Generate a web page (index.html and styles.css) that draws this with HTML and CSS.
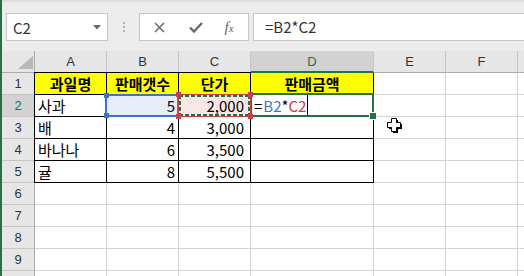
FILE: index.html
```html
<!DOCTYPE html>
<html lang="ko">
<head>
    <meta charset="UTF-8">
    <title>판매금액</title>
    <link rel="stylesheet" href="styles.css">
</head>
<body>
    <div class="window">
        <div class="formula-bar">
            <div class="namebox">
                <span>C2</span>
                <svg class="drop" width="8" height="5" viewBox="0 0 8 5"><polygon points="0,0 8,0 4,4.5" fill="#6a6a6a"/></svg>
            </div>
            <div class="grip"><i></i><i></i><i></i></div>
            <div class="fx-buttons">
                <svg width="11" height="11" viewBox="0 0 11 11"><path d="M1 1 L10 10 M10 1 L1 10" stroke="#6a6a6a" stroke-width="1.5" fill="none"/></svg>
                <svg width="14" height="11" viewBox="0 0 14 11"><path d="M1 5.5 L5 9.5 L13 1" stroke="#6a6a6a" stroke-width="2.4" fill="none"/></svg>
                <span class="fx">f<span>x</span></span>
            </div>
            <div class="formula-input">=B2*C2</div>
        </div>

        <div class="sheet">
            <div class="cell corner"><svg width="15" height="13" viewBox="0 0 15 13"><polygon points="15,0 15,13 0,13" fill="#b8b8b8"/></svg></div>
            <div class="cell ch">A</div>
            <div class="cell ch">B</div>
            <div class="cell ch">C</div>
            <div class="cell ch active">D</div>
            <div class="cell ch">E</div>
            <div class="cell ch">F</div>
            <div class="cell ch"></div>

            <div class="cell rh">1</div>
            <div class="cell tb ta tt hd">과일명</div>
            <div class="cell tb tt hd">판매갯수</div>
            <div class="cell tb tt hd">단가</div>
            <div class="cell tb hd">판매금액</div>
            <div class="cell"></div>
            <div class="cell"></div>
            <div class="cell"></div>

            <div class="cell rh active">2</div>
            <div class="cell tb ta">사과</div>
            <div class="cell tb num ref-blue-fill">5
                <div class="ref-blue"><b class="sq tl"></b><b class="sq bl"></b></div>
            </div>
            <div class="cell tb num price ref-red-fill">2,000
                <div class="ref-red"><b class="sq tl"></b><b class="sq bl"></b><b class="sq tr"></b><b class="sq br"></b></div>
                <div class="marquee"></div>
            </div>
            <div class="cell tb editing">
                <span class="edit-text">=<span class="blue">B2</span>*<span class="red">C2</span></span>
                <div class="active-cell"><b class="handle"></b></div>
            </div>
            <div class="cell"></div>
            <div class="cell"></div>
            <div class="cell"></div>

            <div class="cell rh">3</div>
            <div class="cell tb ta">배</div>
            <div class="cell tb num">4</div>
            <div class="cell tb num price">3,000</div>
            <div class="cell tb"></div>
            <div class="cell"></div>
            <div class="cell"></div>
            <div class="cell"></div>

            <div class="cell rh">4</div>
            <div class="cell tb ta">바나나</div>
            <div class="cell tb num">6</div>
            <div class="cell tb num price">3,500</div>
            <div class="cell tb"></div>
            <div class="cell"></div>
            <div class="cell"></div>
            <div class="cell"></div>

            <div class="cell rh">5</div>
            <div class="cell tb ta">귤</div>
            <div class="cell tb num">8</div>
            <div class="cell tb num price">5,500</div>
            <div class="cell tb"></div>
            <div class="cell"></div>
            <div class="cell"></div>
            <div class="cell"></div>

            <div class="cell rh">6</div>
            <div class="cell"></div><div class="cell"></div><div class="cell"></div><div class="cell"></div><div class="cell"></div><div class="cell"></div><div class="cell"></div>
            <div class="cell rh">7</div>
            <div class="cell"></div><div class="cell"></div><div class="cell"></div><div class="cell"></div><div class="cell"></div><div class="cell"></div><div class="cell"></div>
            <div class="cell rh">8</div>
            <div class="cell"></div><div class="cell"></div><div class="cell"></div><div class="cell"></div><div class="cell"></div><div class="cell"></div><div class="cell"></div>
            <div class="cell rh">9</div>
            <div class="cell"></div><div class="cell"></div><div class="cell"></div><div class="cell"></div><div class="cell"></div><div class="cell"></div><div class="cell"></div>
            <div class="cell rh"></div>
            <div class="cell"></div><div class="cell"></div><div class="cell"></div><div class="cell"></div><div class="cell"></div><div class="cell"></div><div class="cell"></div>
        </div>

        <svg class="pointer" width="17" height="18" viewBox="0 0 17 18">
            <polygon points="6,2 11,2 11,6 15,6 15,11 11,11 11,15 6,15 6,11 2,11 2,6 6,6" fill="#000" transform="translate(1,1)"/>
            <polygon points="5.5,1.5 10.5,1.5 10.5,5.5 14.5,5.5 14.5,10.5 10.5,10.5 10.5,14.5 5.5,14.5 5.5,10.5 1.5,10.5 1.5,5.5 5.5,5.5" fill="#fff" stroke="#000" stroke-width="1"/>
        </svg>
    </div>
</body>
</html>
```

FILE: styles.css
```css
body {
    margin: 0;
    width: 524px;
    height: 276px;
    overflow: hidden;
    background: #fff;
    font-family: "Noto Sans CJK KR", "Liberation Sans", sans-serif;
    color: #000;
}
.window {
    position: relative;
    height: 276px;
    border-left: 2px solid #217346;
    overflow: hidden;
}

/* formula bar */
.formula-bar {
    height: 51px;
    box-sizing: border-box;
    background: #ececec;
    border-top: 2px solid #dcdcdc;
    display: flex;
    align-items: flex-start;
    padding: 11px 0 0 4px;
}
.namebox {
    width: 102px;
    height: 28px;
    box-sizing: border-box;
    background: #fff;
    border: 1px solid #c6c6c6;
    display: flex;
    align-items: center;
    justify-content: space-between;
    padding: 0 6px 0 6px;
    font-size: 15px;
    color: #333;
}
.grip {
    width: 31px;
    height: 28px;
    display: flex;
    flex-direction: column;
    align-items: center;
    justify-content: center;
    gap: 2px;
}
.grip i {
    width: 2px;
    height: 2px;
    background: #b0b0b0;
}
.fx-buttons {
    width: 110px;
    height: 28px;
    box-sizing: border-box;
    background: #fff;
    border: 1px solid #c6c6c6;
    display: grid;
    grid-template-columns: 38px 36px 1fr;
    align-items: center;
    justify-items: center;
}
.fx {
    font-family: "Liberation Serif", serif;
    font-style: italic;
    font-size: 15px;
    color: #666;
    margin-right: 4px;
}
.fx span {
    font-size: 11px;
}
.formula-input {
    flex: 1;
    height: 28px;
    margin-left: 4px;
    box-sizing: border-box;
    background: #fff;
    border: 1px solid #c6c6c6;
    border-right: none;
    padding-left: 11px;
    font-size: 15px;
    line-height: 25px;
    color: #333;
}

/* sheet */
.sheet {
    display: grid;
    grid-template-columns: 33px 72px 72px 72px 123px 72px 72px 1fr;
    grid-auto-rows: 22px;
}
.cell {
    position: relative;
    box-sizing: border-box;
    border-right: 1px solid #d4d4d4;
    border-bottom: 1px solid #d4d4d4;
    padding: 0 3px;
    font-size: 15px;
    line-height: 21px;
    white-space: nowrap;
}
.corner {
    background: #e6e6e6;
    border-right: 1px solid #ababab;
    border-bottom: 1px solid #ababab;
    display: flex;
    align-items: flex-end;
    justify-content: flex-end;
    padding: 0 1px 3px 0;
}
.ch {
    background: #e6e6e6;
    border-right: 1px solid #c6c6c6;
    border-bottom: 1px solid #ababab;
    font-family: "Liberation Sans", sans-serif;
    font-size: 13px;
    text-align: center;
    color: #333;
}
.ch.active {
    background: #d2d2d2;
    border-bottom: 2px solid #217346;
    color: #217346;
}
.rh {
    background: #e6e6e6;
    border-right: 1px solid #ababab;
    border-bottom: 1px solid #c6c6c6;
    font-family: "Liberation Sans", sans-serif;
    font-size: 13px;
    text-align: center;
    color: #333;
}
.rh.active {
    background: #d2d2d2;
    color: #217346;
}

/* data table */
.tb {
    border-right-color: #000;
    border-bottom-color: #000;
}
.ta {
    box-shadow: -1px 0 0 #000;
}
.tt {
    box-shadow: 0 -1px 0 #000;
}
.ta.tt {
    box-shadow: -1px 0 0 #000, 0 -1px 0 #000, -1px -1px 0 #000;
}
.hd {
    background: #ffff00;
    font-weight: bold;
    text-align: center;
}
.num {
    text-align: right;
}
.price {
    padding-right: 6px;
}

/* formula references */
.ref-blue-fill {
    background: #e6edf8;
}
.ref-red-fill {
    background: #f9e6e6;
}
.ref-blue {
    position: absolute;
    left: -2px;
    top: -1px;
    right: -1px;
    bottom: -1px;
    border: 2px solid #3a74cc;
    z-index: 3;
}
.ref-red {
    position: absolute;
    left: -1px;
    top: -1px;
    right: -1px;
    bottom: -1px;
    border: 1px solid #c8424a;
    z-index: 4;
}
.sq {
    position: absolute;
    width: 5px;
    height: 5px;
}
.ref-blue .sq {
    background: #3a74cc;
}
.ref-red .sq {
    background: #c8424a;
}
.ref-blue .tl { left: -3px; top: -3px; }
.ref-blue .bl { left: -3px; bottom: -3px; }
.ref-red .tl { left: -3px; top: -3px; }
.ref-red .bl { left: -3px; bottom: -3px; }
.ref-red .tr { right: -3px; top: -3px; }
.ref-red .br { right: -3px; bottom: -3px; }
.marquee {
    position: absolute;
    left: 0;
    top: 0;
    right: 0;
    bottom: 0;
    z-index: 3;
    background:
        repeating-linear-gradient(90deg, #217346 0 4px, transparent 4px 6px) top / 100% 2px no-repeat,
        repeating-linear-gradient(90deg, #217346 0 4px, transparent 4px 6px) bottom / 100% 2px no-repeat,
        repeating-linear-gradient(180deg, #217346 0 4px, transparent 4px 6px) left / 2px 100% no-repeat,
        repeating-linear-gradient(180deg, #217346 0 4px, transparent 4px 6px) right / 2px 100% no-repeat;
}

/* cell being edited */
.editing {
    padding-left: 3px;
}
.edit-text {
    display: inline-block;
    padding-right: 1px;
    border-right: 1px solid #000;
    height: 21px;
}
.blue {
    color: #3a74cc;
    margin-left: 1px;
}
.red {
    color: #d03a42;
}
.active-cell {
    position: absolute;
    left: -1px;
    top: -2px;
    right: -1px;
    bottom: -1px;
    border: 2px solid #217346;
    z-index: 2;
}
.handle {
    position: absolute;
    right: -5px;
    bottom: -5px;
    width: 6px;
    height: 6px;
    background: #217346;
    border: 1px solid #fff;
}

.pointer {
    position: absolute;
    left: 384px;
    top: 117px;
    z-index: 5;
}
```
